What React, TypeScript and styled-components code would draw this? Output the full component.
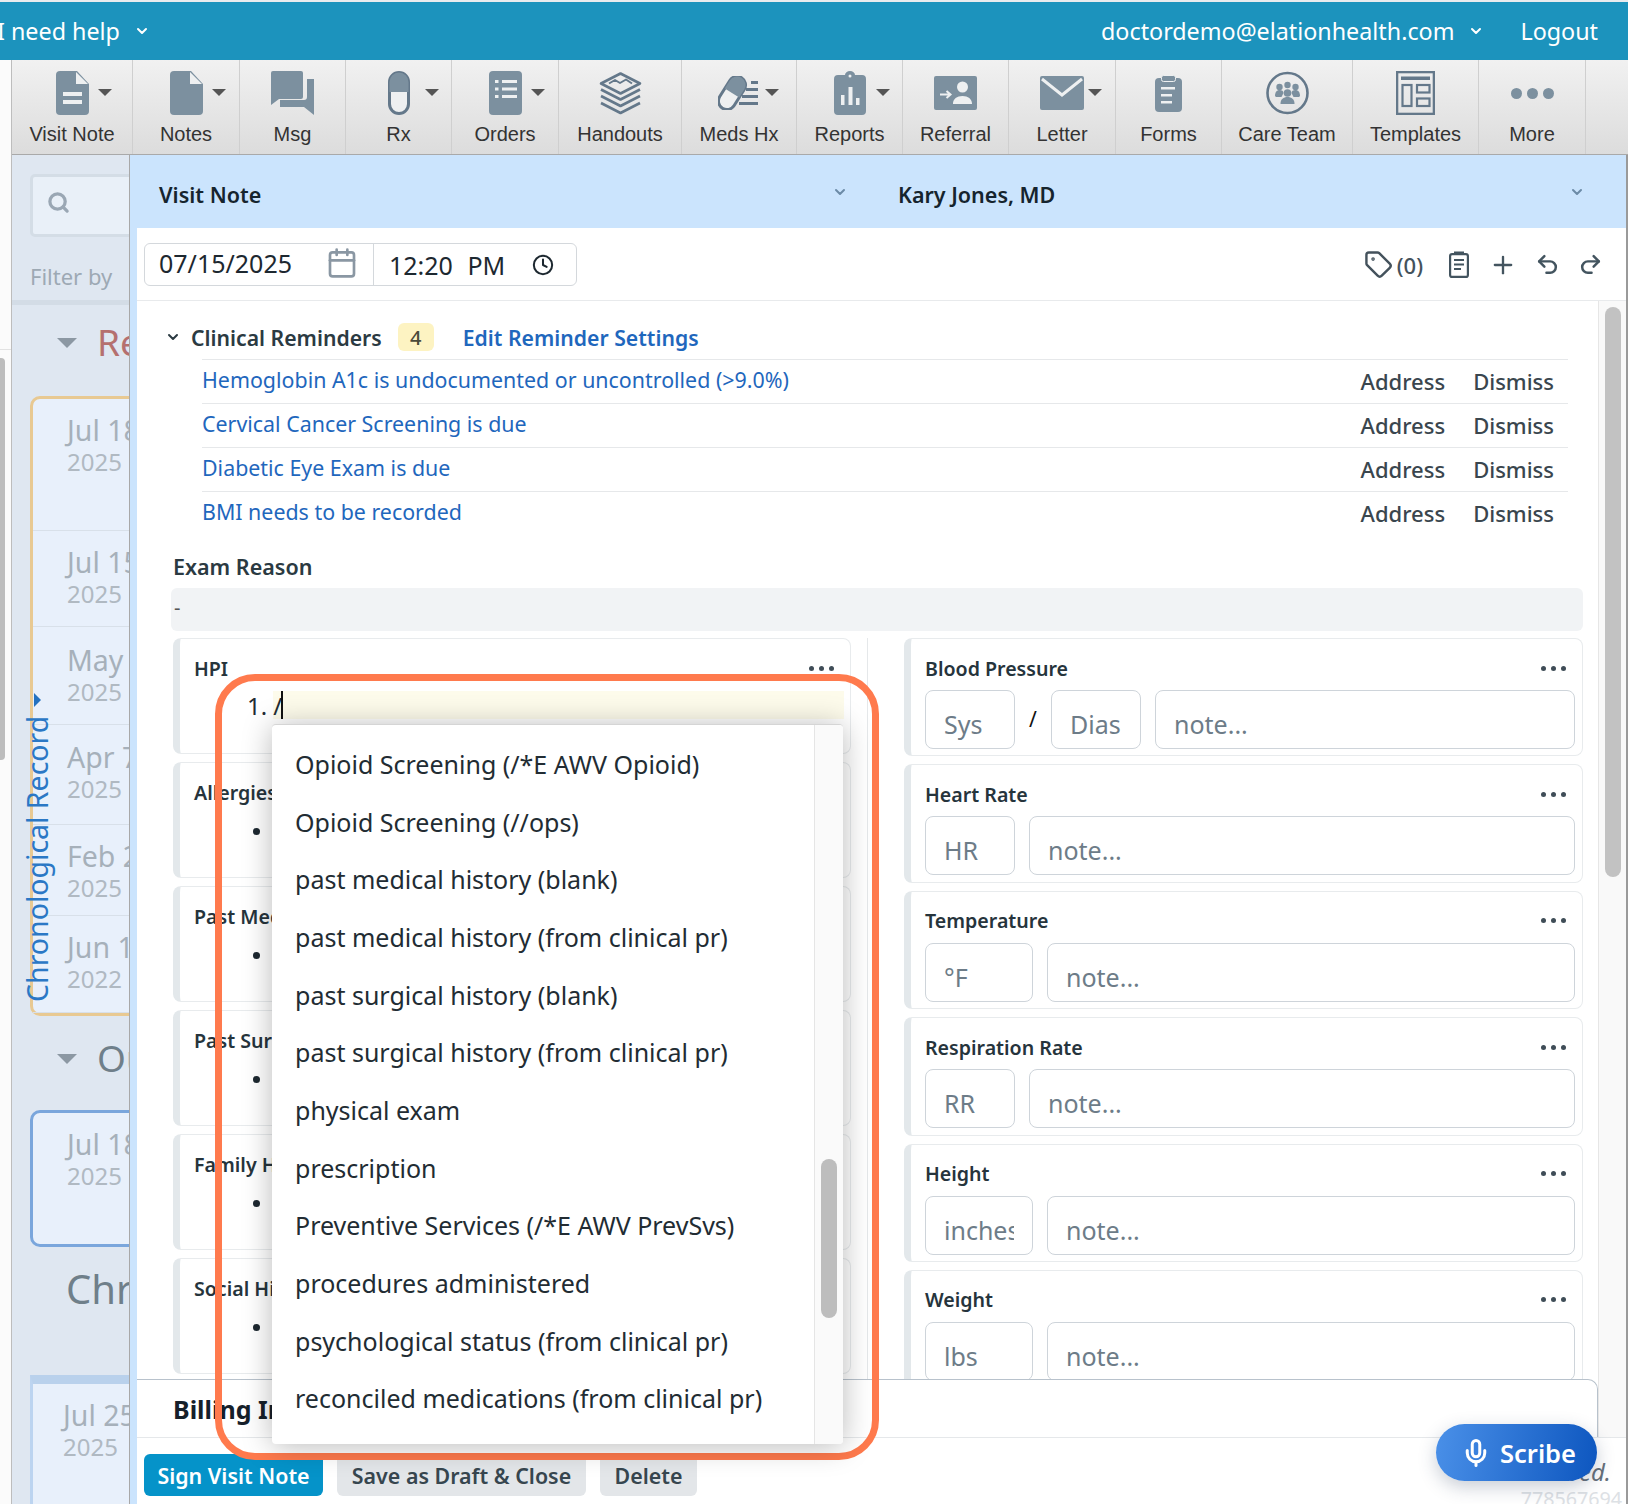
import React from 'react';
import styled, { createGlobalStyle } from 'styled-components';
import {
  Calendar,
  ChevronDown,
  Clock,
  Mic,
  Plus,
  Redo2,
  Search,
  Tag,
  Undo2,
} from 'lucide-react';

const Global = createGlobalStyle`
  html, body { margin: 0; padding: 0; background: #fff; }
  * { box-sizing: border-box; }
  body { font-family: "Noto Sans", "Open Sans", sans-serif; color: #2b3a42; }
`;

const ICON = '#7c909f';
const RIM = '#64788a';
const PAPER = '#eef0f1';

const Root = styled.div`
  position: relative;
  width: 1628px;
  height: 1504px;
  overflow: hidden;
`;

const Header = styled.header`
  height: 60px;
  border-top: 2px solid #e8ebee;
  background: #1c93bd;
  color: #fff;
  font-size: 23.3px;
  display: flex;
  align-items: center;
  justify-content: space-between;
  padding: 0 30px 0 0;
`;

const HeaderGroup = styled.div`
  display: flex;
  align-items: center;
`;

const HelpLabel = styled.span`
  margin-left: -3px;
`;

const HeaderChevron = styled(ChevronDown)`
  margin-left: 14px;
`;

const Logout = styled.span`
  margin-left: 36px;
`;

const Body = styled.div`
  display: flex;
  height: 1444px;
`;

const Gutter = styled.div`
  width: 12px;
  flex: none;
  background: #fbfbfb;
  border-right: 1px solid #bdbdbd;
`;

const GutterTop = styled.div`
  height: 290px;
  border-bottom: 1px solid #e2e2e2;
`;

const GutterThumb = styled.div`
  width: 5px;
  height: 402px;
  margin-top: 8px;
  background: #bdbdbd;
  border-radius: 0 4px 4px 0;
`;

const Main = styled.div`
  flex: 1;
  min-width: 0;
  display: flex;
  flex-direction: column;
`;

const Toolbar = styled.nav`
  height: 95px;
  flex: none;
  display: flex;
  background: linear-gradient(#f1f1f1, #dcdcdc);
  border-bottom: 1px solid #a9a9a9;
`;

const ToolItem = styled.div<{ $w: number }>`
  position: relative;
  width: ${(p) => p.$w}px;
  flex: none;
  display: flex;
  flex-direction: column;
  align-items: center;
  border-right: 1px solid #cfcfcf;
  padding-top: 11px;
`;

const ToolIcon = styled.div`
  height: 44px;
  display: flex;
  align-items: center;
  justify-content: center;
`;

const ToolCaret = styled.span`
  position: absolute;
  top: 29px;
  left: calc(50% + 26px);
  border-left: 7px solid transparent;
  border-right: 7px solid transparent;
  border-top: 7px solid #555;
`;

const ToolLabel = styled.span`
  margin-top: 7px;
  font-family: "Liberation Sans", Arial, sans-serif;
  font-size: 20px;
  line-height: 24px;
  color: #333;
  white-space: nowrap;
`;

const Workspace = styled.div`
  flex: 1;
  min-height: 0;
  display: flex;
`;

const Sidebar = styled.aside`
  position: relative;
  width: 118px;
  flex: none;
  overflow: hidden;
  background: #dfe7f1;
  border-right: 1px solid #a8a8a8;
  padding-left: 18px;
  white-space: nowrap;
`;

const SearchBox = styled.div`
  width: 120px;
  height: 63px;
  margin-top: 19px;
  border: 3px solid #d4dde6;
  border-radius: 5px;
  background: #e9f0f8;
  display: flex;
  align-items: center;
  padding: 0 0 6px 14px;
  color: #9aa7b4;
`;

const FilterLabel = styled.div`
  margin-top: 24px;
  font-size: 22px;
  line-height: 30px;
  color: #9da9b4;
`;

const SideRule = styled.div`
  height: 5px;
  margin: 9px 0 0 -18px;
  background: #d3dce6;
`;

const SectionHead = styled.div<{ $color: string; $top: number }>`
  height: 40px;
  margin-top: ${(p) => p.$top}px;
  padding-left: 27px;
  display: flex;
  align-items: center;
  gap: 20px;
  font-size: 37px;
  color: ${(p) => p.$color};
`;

const Triangle = styled.span`
  margin-top: 4px;
  border-left: 10px solid transparent;
  border-right: 10px solid transparent;
  border-top: 10px solid #8c98a3;
`;

const VisitCard = styled.div<{ $color: string; $h: number; $top: number }>`
  width: 130px;
  height: ${(p) => p.$h}px;
  margin-top: ${(p) => p.$top}px;
  background: #e8f0fb;
  border: 3px solid ${(p) => p.$color};
  border-radius: 10px;
`;

const OpenCard = styled.div`
  width: 130px;
  height: 140px;
  margin-top: 62px;
  background: #e8f0fb;
  border-top: 9px solid #b9d1ec;
  border-left: 3px solid #bcd4f0;
`;

const VisitRow = styled.div<{ $h?: number; $left?: number; $pad?: number }>`
  height: ${(p) => (p.$h ? `${p.$h}px` : 'auto')};
  padding: ${(p) => p.$pad ?? 14}px 0 0 ${(p) => p.$left ?? 34}px;
  border-bottom: ${(p) => (p.$h ? '1px solid #d8e0e9' : 'none')};
`;

const VisitDay = styled.div`
  font-size: 28.5px;
  line-height: 34px;
  color: #a6b0ba;
`;

const VisitYear = styled.div`
  font-size: 24px;
  line-height: 30px;
  color: #b0b9c2;
`;

const ChronoHeading = styled.div`
  margin: 18px 0 0 36px;
  font-size: 40px;
  line-height: 48px;
  color: #6f7f8a;
`;

const ChronoTab = styled.div`
  position: absolute;
  left: 10px;
  top: 561px;
  height: 286px;
  writing-mode: vertical-rl;
  transform: rotate(180deg);
  font-size: 28.5px;
  line-height: 30px;
  color: #2b78c5;
`;

const ChronoArrow = styled.span`
  position: absolute;
  left: 22px;
  top: 538px;
  border-top: 7px solid transparent;
  border-bottom: 7px solid transparent;
  border-left: 7px solid #2472c0;
`;

const Panel = styled.section`
  flex: 1;
  min-width: 0;
  display: flex;
  flex-direction: column;
`;

const PanelHeader = styled.div`
  height: 73px;
  flex: none;
  background: #cbe4fd;
  display: flex;
  align-items: center;
  padding: 6px 41px 0 29px;
  font-size: 21.5px;
  font-weight: 600;
  gap: 50px;
`;

const HeaderCell = styled.div<{ $w?: number }>`
  display: flex;
  align-items: center;
  justify-content: space-between;
  ${(p) => (p.$w ? `width: ${p.$w}px;` : 'flex: 1;')}
  color: #16242e;
  svg {
    color: #6c8ba7;
    margin-bottom: 6px;
  }
`;

const PanelBody = styled.div`
  flex: 1;
  min-height: 0;
  display: flex;
  flex-direction: column;
  border-left: 7px solid #cbe4fd;
  background: #fff;
`;

const DateRow = styled.div`
  height: 73px;
  flex: none;
  display: flex;
  align-items: flex-start;
  padding: 15px 23px 0 7px;
  border-bottom: 1px solid #e8eaec;
`;

const DateGroup = styled.div`
  width: 433px;
  height: 43px;
  display: flex;
  border: 1px solid #d4d8dc;
  border-radius: 6px;
  font-size: 25px;
  color: #1d2830;
`;

const DateCell = styled.div`
  width: 229px;
  flex: none;
  display: flex;
  align-items: center;
  justify-content: space-between;
  padding: 0 15px 4px 14px;
  border-right: 1px solid #d4d8dc;
  svg {
    color: #8a97a3;
  }
`;

const TimeCell = styled.div`
  flex: 1;
  display: flex;
  align-items: center;
  justify-content: space-between;
  padding: 0 22px 0 15px;
  word-spacing: 8px;
`;

const DateTools = styled.div`
  margin-left: auto;
  display: flex;
  align-items: center;
  gap: 18px;
  height: 43px;
  color: #43545f;
`;

const TagGroup = styled.div`
  display: flex;
  align-items: center;
  gap: 4px;
  margin-right: 8px;
  font-size: 22px;
  font-weight: 500;
  color: #44525c;
`;

const ContentRow = styled.div`
  flex: 1;
  min-height: 0;
  display: flex;
`;

const Column = styled.div`
  flex: 1;
  min-width: 0;
  display: flex;
  flex-direction: column;
`;

const Scroller = styled.div`
  flex: 1;
  min-height: 0;
  overflow: hidden;
  padding-top: 22px;
`;

const ScrollTrack = styled.div`
  width: 28px;
  flex: none;
  padding: 6px 0 0 6px;
  background: #f9f9f9;
  border-left: 1px solid #e6e6e6;
`;

const ScrollThumb = styled.div`
  width: 16px;
  height: 570px;
  background: #c2c2c2;
  border-radius: 8px;
`;

const RightEdge = styled.div`
  width: 2px;
  flex: none;
  background: #9a9a9a;
`;

const ReminderHead = styled.div`
  height: 28px;
  display: flex;
  align-items: center;
  padding-left: 28px;
  font-size: 21.2px;
  font-weight: 600;
  color: #2b3a42;
`;

const ReminderChevron = styled(ChevronDown)`
  color: #2b3a42;
  margin-right: 10px;
`;

const CountBadge = styled.span`
  width: 36px;
  height: 28px;
  margin-left: 16px;
  background: #fdf3c2;
  border-radius: 6px;
  display: flex;
  align-items: center;
  justify-content: center;
  font-size: 20px;
  font-weight: 500;
  color: #4a4a3a;
`;

const EditLink = styled.a`
  margin-left: 29px;
  color: #1f67bd;
  font-weight: 600;
`;

const ReminderList = styled.div`
  margin: 8px 0 0 65px;
  width: 1366px;
`;

const ReminderRow = styled.div`
  height: 44px;
  display: flex;
  align-items: center;
  justify-content: space-between;
  padding: 0 14px 5px 0;
  border-top: 1px solid #e6e8ea;
  font-size: 21.4px;
`;

const ReminderLink = styled.a`
  color: #1f67bd;
`;

const ReminderActions = styled.div`
  display: flex;
  gap: 28px;
  margin-top: 3px;
  font-size: 22px;
  font-weight: 500;
  color: #3a464e;
`;

const ExamLabel = styled.div`
  margin: 17px 0 0 36px;
  font-size: 21.5px;
  line-height: 30px;
  font-weight: 600;
  color: #2b3a42;
`;

const ExamBox = styled.div`
  height: 43px;
  margin: 6px 15px 0 34px;
  padding: 0 3px 4px;
  background: #f1f3f5;
  border-radius: 6px;
  display: flex;
  align-items: center;
  font-size: 20px;
  color: #555;
`;

const Columns = styled.div`
  display: flex;
  margin: 7px 0 0 36px;
`;

const LeftColumn = styled.div`
  width: 695px;
  flex: none;
  padding-right: 16px;
  border-right: 1px solid #e5e8ea;
  display: flex;
  flex-direction: column;
  gap: 8px;
`;

const RightColumn = styled.div`
  width: 679px;
  flex: none;
  margin-left: 36px;
  display: flex;
  flex-direction: column;
  gap: 8px;
`;

const Card = styled.div<{ $h: number }>`
  height: ${(p) => p.$h}px;
  flex: none;
  border: 1px solid #e8ebed;
  border-left: 7px solid #e3e8eb;
  border-radius: 8px;
  padding: 17px 0 0 14px;
`;

const CardHead = styled.div`
  height: 24px;
  display: flex;
  align-items: center;
  justify-content: space-between;
  padding-right: 16px;
  font-size: 19.6px;
  font-weight: 600;
  color: #26343c;
  white-space: nowrap;
`;

const Dots = styled.span`
  display: flex;
  gap: 5px;
  i {
    width: 5px;
    height: 5px;
    border-radius: 50%;
    background: #3f4d57;
  }
`;

const HpiLine = styled.div`
  display: flex;
  align-items: center;
  height: 28px;
  margin: 11px 6px 0 53px;
  font-size: 24px;
  color: #222c33;
`;

const HpiEdit = styled.span`
  flex: 1;
  height: 28px;
  margin-left: 6px;
  display: flex;
  align-items: center;
  background: #fdfbeb;
`;

const TextCaret = styled.span`
  width: 2px;
  height: 28px;
  margin-left: -1px;
  background: #111;
`;

const Bullet = styled.div`
  width: 7px;
  height: 7px;
  margin: 24px 0 0 59px;
  border-radius: 50%;
  background: #1d2830;
`;

const InputRow = styled.div`
  display: flex;
  gap: 14px;
  margin: 10px 7px 0 0;
`;

const VitalInput = styled.input<{ $w?: number }>`
  height: 59px;
  min-width: 0;
  ${(p) => (p.$w ? `width: ${p.$w}px; flex: none;` : 'flex: 1;')}
  padding: 9px 18px 0 18px;
  border: 1px solid #ced4da;
  border-radius: 8px;
  background: #fff;
  font-family: inherit;
  font-size: 25px;
  outline: none;
  &::placeholder {
    color: #6d7c88;
    opacity: 1;
  }
`;

const Slash = styled.span`
  width: 8px;
  margin: 10px 0 0;
  font-size: 21px;
  line-height: 38px;
  text-align: center;
  color: #111;
`;

const BillingBar = styled.div`
  height: 58px;
  flex: none;
  display: flex;
  align-items: center;
  padding-left: 36px;
  border: 1px solid #b8c2cc;
  border-bottom: none;
  border-left: none;
  border-radius: 0 10px 0 0;
  font-size: 25px;
  font-weight: 700;
  color: #16202a;
`;

const Footer = styled.footer`
  height: 67px;
  flex: none;
  display: flex;
  align-items: flex-start;
  gap: 14px;
  padding: 16px 4px 0 7px;
  border-top: 1px solid #e5e8ea;
  overflow: hidden;
`;

const FooterButton = styled.button<{ $primary?: boolean; $w: number }>`
  width: ${(p) => p.$w}px;
  height: 42px;
  border: none;
  border-radius: 6px;
  background: ${(p) => (p.$primary ? '#0593c9' : '#e3e6e9')};
  color: ${(p) => (p.$primary ? '#fff' : '#37464f')};
  font-family: inherit;
  font-size: 21.4px;
  font-weight: 600;
  padding: 0;
`;

const SaveStatus = styled.div`
  margin-left: auto;
  margin-top: 3px;
  text-align: right;
`;

const SavedText = styled.div`
  padding-right: 11px;
  font-size: 24px;
  line-height: 30px;
  font-style: italic;
  color: #66707a;
`;

const NoteNumber = styled.div`
  font-size: 19.7px;
  line-height: 24px;
  color: #dde1e5;
`;

const ScribeButton = styled.button`
  position: absolute;
  left: 1436px;
  top: 1424px;
  width: 161px;
  height: 57px;
  border: none;
  border-radius: 29px;
  background: linear-gradient(100deg, #4a90e8, #0d56bf);
  box-shadow: 0 6px 18px rgba(40, 60, 90, 0.25);
  color: #fff;
  font-family: inherit;
  font-size: 25.5px;
  font-weight: 600;
  display: flex;
  align-items: center;
  justify-content: center;
  gap: 9px;
  padding: 0 0 0 4px;
`;

const Highlight = styled.div`
  position: absolute;
  left: 215px;
  top: 674px;
  width: 664px;
  height: 786px;
  border: 7px solid #ff7a4d;
  border-radius: 40px;
  pointer-events: none;
`;

const Menu = styled.div`
  position: absolute;
  left: 272px;
  top: 724px;
  width: 571px;
  height: 720px;
  display: flex;
  background: #fff;
  border-top: 1px solid #d5d5d5;
  border-radius: 4px;
  box-shadow: 0 2px 30px rgba(0, 0, 0, 0.28);
`;

const MenuList = styled.div`
  flex: 1;
  padding-top: 10px;
`;

const MenuItem = styled.div`
  height: 57.7px;
  display: flex;
  align-items: center;
  padding-left: 23px;
  font-size: 25px;
  color: #222c33;
  white-space: nowrap;
`;

const MenuTrack = styled.div`
  width: 29px;
  flex: none;
  padding: 434px 0 0 6px;
  background: #fafafa;
  border-left: 1px solid #e5e5e5;
  border-radius: 0 4px 4px 0;
`;

const MenuThumb = styled.div`
  width: 16px;
  height: 159px;
  background: #bdbdbd;
  border-radius: 8px;
`;

const ClipboardSvg = styled.svg`
  margin-right: 2px;
`;

const DocShape = 'M4 0H21L33 13V40a4 4 0 0 1-4 4H4a4 4 0 0 1-4-4V4a4 4 0 0 1 4-4Z';

const VisitNoteIcon = () => (
  <svg width="33" height="44" viewBox="0 0 33 44">
    <path d={DocShape} fill={ICON} />
    <path d="M20 1 32 13H20Z" fill={PAPER} />
    <rect x="7" y="21" width="19" height="4" fill={PAPER} />
    <rect x="7" y="29" width="19" height="4" fill={PAPER} />
  </svg>
);

const NotesIcon = () => (
  <svg width="33" height="44" viewBox="0 0 33 44">
    <path d={DocShape} fill={ICON} />
    <path d="M20 1 32 13H20Z" fill={PAPER} />
  </svg>
);

const MsgIcon = () => (
  <svg width="43" height="44" viewBox="0 0 43 44">
    <path d="M2 0H30a2 2 0 0 1 2 2V26a2 2 0 0 1-2 2H8L0 34V2a2 2 0 0 1 2-2Z" fill={ICON} />
    <path d="M36 8h7V44L33 36H9V29H33a3 3 0 0 0 3-3Z" fill={ICON} />
  </svg>
);

const RxIcon = () => (
  <svg width="22" height="44" viewBox="0 0 22 44">
    <rect x="1.5" y="1.5" width="19" height="41" rx="9.5" fill={PAPER} stroke={RIM} strokeWidth="3" />
    <path d="M1.5 21V11a9.5 9.5 0 0 1 19 0V21Z" fill={ICON} />
  </svg>
);

const OrdersIcon = () => (
  <svg width="33" height="44" viewBox="0 0 33 44">
    <rect width="33" height="44" rx="4" fill={ICON} />
    {[9, 16.5, 24].map((y) => (
      <g key={y} fill={PAPER}>
        <rect x="6" y={y} width="3.5" height="3" />
        <rect x="13" y={y} width="15" height="3" />
      </g>
    ))}
  </svg>
);

const HandoutsIcon = () => (
  <svg width="43" height="43" viewBox="0 0 43 43" fill="none" stroke={RIM} strokeWidth="2.6" strokeLinejoin="round">
    <path d="M21.5 1.5 41 11.5 21.5 21.5 2 11.5Z" />
    <path d="M10 11.5 16 8 21 11 27 7.5 33 11.5" strokeWidth="2" />
    <path d="M2 17.5 21.5 27.5 41 17.5" />
    <path d="M2 24 21.5 34 41 24" />
    <path d="M2 31 21.5 41 41 31" />
  </svg>
);

const MedsIcon = () => (
  <svg width="42" height="34" viewBox="0 0 42 34">
    <g transform="rotate(32 14 17)">
      <rect x="5.5" y="-1" width="17" height="36" rx="8.5" fill={PAPER} stroke={RIM} strokeWidth="3" />
      <path d="M5.5 17V7.5a8.5 8.5 0 0 1 17 0V17Z" fill={ICON} />
    </g>
    <rect x="33" y="5" width="7" height="3" fill={RIM} />
    <rect x="28" y="12" width="12" height="3" fill={RIM} />
    <rect x="24" y="19" width="16" height="3" fill={RIM} />
    <rect x="21" y="26" width="19" height="3" fill={RIM} />
  </svg>
);

const ReportsIcon = () => (
  <svg width="32" height="44" viewBox="0 0 32 44">
    <path d="M4 4H11a5 4 0 0 1 10 0H28a4 4 0 0 1 4 4V40a4 4 0 0 1-4 4H4a4 4 0 0 1-4-4V8a4 4 0 0 1 4-4Z" fill={ICON} />
    <circle cx="16" cy="5" r="1.5" fill={PAPER} />
    <rect x="7" y="24" width="3.5" height="10" fill={PAPER} />
    <rect x="14.5" y="16" width="4" height="18" fill={PAPER} />
    <rect x="22" y="27" width="3.5" height="7" fill={PAPER} />
  </svg>
);

const ReferralIcon = () => (
  <svg width="43" height="34" viewBox="0 0 43 34">
    <rect width="43" height="34" rx="2" fill={ICON} />
    <circle cx="28.5" cy="11" r="5.5" fill={PAPER} />
    <path d="M19 28a3 3 0 0 1 0-.5c0-4.500 4-7.500 9.500-7.500S38 23 38 27.500V28Z" fill={PAPER} />
    <path d="M6 18.500H16M12.500 15l4 3.500-4 3.500" fill="none" stroke={PAPER} strokeWidth="2" />
  </svg>
);

const LetterIcon = () => (
  <svg width="44" height="34" viewBox="0 0 44 34">
    <rect width="44" height="34" rx="2" fill={ICON} />
    <path d="M2 3 22 19 42 3" fill="none" stroke={PAPER} strokeWidth="3" />
  </svg>
);

const FormsIcon = () => (
  <svg width="27" height="37" viewBox="0 0 27 37">
    <rect y="3" width="27" height="34" rx="4" fill={ICON} />
    <rect x="6.500" y="0.500" width="14" height="6" rx="2" fill={ICON} stroke={PAPER} />
    <rect x="6" y="12" width="14" height="2.500" fill={PAPER} />
    <rect x="6" y="19" width="11" height="2.500" fill={PAPER} />
    <rect x="6" y="26" width="11" height="2.500" fill={PAPER} />
  </svg>
);

const CareTeamIcon = () => (
  <svg width="43" height="44" viewBox="0 0 43 44">
    <circle cx="21.500" cy="22" r="20" fill="none" stroke={RIM} strokeWidth="2.600" />
    <g fill={ICON}>
      <circle cx="13.500" cy="16" r="3.200" />
      <circle cx="21.500" cy="14" r="3.200" />
      <circle cx="29.500" cy="16" r="3.200" />
      <path d="M9 25c0-4 2-6 4.500-6s4 1 4 3l-2 4H10Z" />
      <path d="M34 25c0-4-2-6-4.500-6s-4 1-4 3l2 4H33Z" />
      <circle cx="21.500" cy="22" r="3.800" />
      <path d="M14.500 33c0-5 3-7 7-7s7 2 7 7Z" />
    </g>
  </svg>
);

const TemplatesIcon = () => (
  <svg width="39" height="44" viewBox="0 0 39 44" fill="none" stroke={RIM} strokeWidth="2.200">
    <rect x="1.100" y="1.100" width="36.800" height="41.800" strokeWidth="2.400" />
    <rect x="5" y="5.500" width="29" height="3.500" fill={RIM} stroke="none" />
    <rect x="6.500" y="14" width="9" height="21" />
    <rect x="21" y="14" width="12.500" height="7.500" />
    <rect x="21" y="27.500" width="12.500" height="7.500" />
  </svg>
);

const MoreIcon = () => (
  <svg width="43" height="11" viewBox="0 0 43 11">
    <circle cx="5.500" cy="5.500" r="5.500" fill={ICON} />
    <circle cx="21.500" cy="5.500" r="5.500" fill={ICON} />
    <circle cx="37.500" cy="5.500" r="5.500" fill={ICON} />
  </svg>
);

const ClipboardGlyph = () => (
  <ClipboardSvg width="20" height="27" viewBox="0 0 20 27" fill="none" stroke="#43545f" strokeWidth="2.200">
    <rect x="1.100" y="3.100" width="17.800" height="22.800" rx="2" />
    <rect x="5" y="0.500" width="10" height="2.500" fill="#43545f" stroke="none" />
    <path d="M5 9H15M5 13.500H15M5 18H12" strokeWidth="1.800" />
  </ClipboardSvg>
);

const tools = [
  { label: 'Visit Note', w: 121, Icon: VisitNoteIcon, caret: true },
  { label: 'Notes', w: 107, Icon: NotesIcon, caret: true },
  { label: 'Msg', w: 106, Icon: MsgIcon },
  { label: 'Rx', w: 106, Icon: RxIcon, caret: true },
  { label: 'Orders', w: 107, Icon: OrdersIcon, caret: true },
  { label: 'Handouts', w: 123, Icon: HandoutsIcon },
  { label: 'Meds Hx', w: 115, Icon: MedsIcon, caret: true },
  { label: 'Reports', w: 106, Icon: ReportsIcon, caret: true },
  { label: 'Referral', w: 106, Icon: ReferralIcon },
  { label: 'Letter', w: 107, Icon: LetterIcon, caret: true },
  { label: 'Forms', w: 106, Icon: FormsIcon },
  { label: 'Care Team', w: 131, Icon: CareTeamIcon },
  { label: 'Templates', w: 126, Icon: TemplatesIcon },
  { label: 'More', w: 107, Icon: MoreIcon },
];

const reminders = [
  'Hemoglobin A1c is undocumented or uncontrolled (>9.0%)',
  'Cervical Cancer Screening is due',
  'Diabetic Eye Exam is due',
  'BMI needs to be recorded',
];

const historyVisits = [
  { day: 'Jul 18', year: '2025', h: 132, pad: 14 },
  { day: 'Jul 15', year: '2025', h: 96, pad: 14 },
  { day: 'May 1', year: '2025', h: 98, pad: 16 },
  { day: 'Apr 7', year: '2025', h: 100, pad: 15 },
  { day: 'Feb 2', year: '2025', h: 91, pad: 14 },
  { day: 'Jun 1', year: '2022', h: 97, pad: 14 },
];

const noteSections = ['Allergies', 'Past Medical', 'Past Surgical', 'Family History', 'Social History'];

const vitals = [
  { title: 'Heart Rate', placeholder: 'HR', w: 90 },
  { title: 'Temperature', placeholder: '°F', w: 108 },
  { title: 'Respiration Rate', placeholder: 'RR', w: 90 },
  { title: 'Height', placeholder: 'inches', w: 108 },
  { title: 'Weight', placeholder: 'lbs', w: 108 },
];

const templates = [
  'Opioid Screening (/*E AWV Opioid)',
  'Opioid Screening (//ops)',
  'past medical history (blank)',
  'past medical history (from clinical pr)',
  'past surgical history (blank)',
  'past surgical history (from clinical pr)',
  'physical exam',
  'prescription',
  'Preventive Services (/*E AWV PrevSvs)',
  'procedures administered',
  'psychological status (from clinical pr)',
  'reconciled medications (from clinical pr)',
];

const MoreDots = () => (
  <Dots>
    <i />
    <i />
    <i />
  </Dots>
);

export default function App() {
  return (
    <Root>
      <Global />
      <Header>
        <HeaderGroup>
          <HelpLabel>I need help</HelpLabel>
          <HeaderChevron size={16} strokeWidth={3} />
        </HeaderGroup>
        <HeaderGroup>
          <span>doctordemo@elationhealth.com</span>
          <HeaderChevron size={16} strokeWidth={3} />
          <Logout>Logout</Logout>
        </HeaderGroup>
      </Header>
      <Body>
        <Gutter>
          <GutterTop />
          <GutterThumb />
        </Gutter>
        <Main>
          <Toolbar>
            {tools.map(({ label, w, Icon, caret }) => (
              <ToolItem key={label} $w={w}>
                <ToolIcon>
                  <Icon />
                </ToolIcon>
                {caret && <ToolCaret />}
                <ToolLabel>{label}</ToolLabel>
              </ToolItem>
            ))}
          </Toolbar>
          <Workspace>
            <Sidebar>
              <SearchBox>
                <Search size={23} strokeWidth={3.4} />
              </SearchBox>
              <FilterLabel>Filter by</FilterLabel>
              <SideRule />
              <SectionHead $color="#b5706f" $top={16}>
                <Triangle />
                Reminders
              </SectionHead>
              <VisitCard $color="#e8c992" $h={620} $top={35}>
                {historyVisits.map((v) => (
                  <VisitRow key={v.day} $h={v.h} $pad={v.pad}>
                    <VisitDay>{v.day}</VisitDay>
                    <VisitYear>{v.year}</VisitYear>
                  </VisitRow>
                ))}
              </VisitCard>
              <SectionHead $color="#6f7f8a" $top={21}>
                <Triangle />
                Outstanding
              </SectionHead>
              <VisitCard $color="#7aa6dc" $h={137} $top={33}>
                <VisitRow>
                  <VisitDay>Jul 18</VisitDay>
                  <VisitYear>2025</VisitYear>
                </VisitRow>
              </VisitCard>
              <ChronoHeading>Chronological</ChronoHeading>
              <OpenCard>
                <VisitRow $left={30}>
                  <VisitDay>Jul 25</VisitDay>
                  <VisitYear>2025</VisitYear>
                </VisitRow>
              </OpenCard>
              <ChronoArrow />
              <ChronoTab>Chronological Record</ChronoTab>
            </Sidebar>
            <Panel>
              <PanelHeader>
                <HeaderCell $w={689}>
                  Visit Note
                  <ChevronDown size={16} strokeWidth={3} />
                </HeaderCell>
                <HeaderCell>
                  Kary Jones, MD
                  <ChevronDown size={16} strokeWidth={3} />
                </HeaderCell>
              </PanelHeader>
              <PanelBody>
                <DateRow>
                  <DateGroup>
                    <DateCell>
                      07/15/2025
                      <Calendar size={32} strokeWidth={2} />
                    </DateCell>
                    <TimeCell>
                      12:20 PM
                      <Clock size={22} strokeWidth={2.2} />
                    </TimeCell>
                  </DateGroup>
                  <DateTools>
                    <TagGroup>
                      <Tag size={29} strokeWidth={2} />
                      (0)
                    </TagGroup>
                    <ClipboardGlyph />
                    <Plus size={28} strokeWidth={2} />
                    <Undo2 size={25} strokeWidth={2.4} />
                    <Redo2 size={25} strokeWidth={2.4} />
                  </DateTools>
                </DateRow>
                <ContentRow>
                  <Column>
                    <Scroller>
                      <ReminderHead>
                        <ReminderChevron size={16} strokeWidth={3} />
                        Clinical Reminders
                        <CountBadge>4</CountBadge>
                        <EditLink>Edit Reminder Settings</EditLink>
                      </ReminderHead>
                      <ReminderList>
                        {reminders.map((r) => (
                          <ReminderRow key={r}>
                            <ReminderLink>{r}</ReminderLink>
                            <ReminderActions>
                              <span>Address</span>
                              <span>Dismiss</span>
                            </ReminderActions>
                          </ReminderRow>
                        ))}
                      </ReminderList>
                      <ExamLabel>Exam Reason</ExamLabel>
                      <ExamBox>-</ExamBox>
                      <Columns>
                        <LeftColumn>
                          <Card $h={116}>
                            <CardHead>
                              HPI
                              <MoreDots />
                            </CardHead>
                            <HpiLine>
                              1.
                              <HpiEdit>
                                /
                                <TextCaret />
                              </HpiEdit>
                            </HpiLine>
                          </Card>
                          {noteSections.map((s) => (
                            <Card key={s} $h={116}>
                              <CardHead>
                                {s}
                                <MoreDots />
                              </CardHead>
                              <Bullet />
                            </Card>
                          ))}
                        </LeftColumn>
                        <RightColumn>
                          <Card $h={118.4}>
                            <CardHead>
                              Blood Pressure
                              <MoreDots />
                            </CardHead>
                            <InputRow>
                              <VitalInput $w={90} placeholder="Sys" readOnly />
                              <Slash>/</Slash>
                              <VitalInput $w={90} placeholder="Dias" readOnly />
                              <VitalInput placeholder="note..." readOnly />
                            </InputRow>
                          </Card>
                          {vitals.map((v) => (
                            <Card key={v.title} $h={118.4}>
                              <CardHead>
                                {v.title}
                                <MoreDots />
                              </CardHead>
                              <InputRow>
                                <VitalInput $w={v.w} placeholder={v.placeholder} readOnly />
                                <VitalInput placeholder="note..." readOnly />
                              </InputRow>
                            </Card>
                          ))}
                        </RightColumn>
                      </Columns>
                    </Scroller>
                    <BillingBar>Billing Information</BillingBar>
                  </Column>
                  <ScrollTrack>
                    <ScrollThumb />
                  </ScrollTrack>
                </ContentRow>
                <Footer>
                  <FooterButton $primary $w={179}>Sign Visit Note</FooterButton>
                  <FooterButton $w={249}>Save as Draft &amp; Close</FooterButton>
                  <FooterButton $w={97}>Delete</FooterButton>
                  <SaveStatus>
                    <SavedText>Saved.</SavedText>
                    <NoteNumber>778567694</NoteNumber>
                  </SaveStatus>
                </Footer>
              </PanelBody>
            </Panel>
            <RightEdge />
          </Workspace>
        </Main>
      </Body>
      <Highlight />
      <Menu>
        <MenuList>
          {templates.map((t) => (
            <MenuItem key={t}>{t}</MenuItem>
          ))}
        </MenuList>
        <MenuTrack>
          <MenuThumb />
        </MenuTrack>
      </Menu>
      <ScribeButton>
        <Mic size={30} strokeWidth={2.4} />
        Scribe
      </ScribeButton>
    </Root>
  );
}
